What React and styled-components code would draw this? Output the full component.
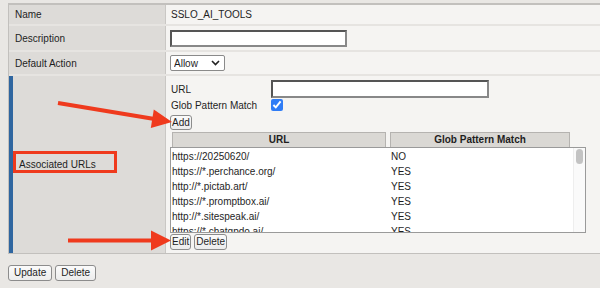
import React from "react";
import styled, { createGlobalStyle } from "styled-components";

const Global = createGlobalStyle`
  html, body { margin: 0; padding: 0; }
  body {
    background: #e9e7e4;
    font-family: "Liberation Sans", Arial, sans-serif;
    font-size: 10px;
    color: #1e1e1e;
  }
`;

const Page = styled.div`
  position: relative;
  width: 600px;
  height: 288px;
  padding-top: 3px;
  box-sizing: border-box;
  overflow: hidden;
`;

const Table = styled.div`
  margin-left: 8px;
  border-top: 2px solid #c2c0bd;
  border-left: 1px solid #c2c0bd;
  display: flex;
  flex-direction: column;
  gap: 2px;
  background: #e6e4e1;
  border-bottom: 1px solid #c2c0bd;
`;

const Row = styled.div`
  display: grid;
  grid-template-columns: 157px 1fr;
  height: ${(p) => p.$h}px;
`;

const Label = styled.div`
  background: #dddbd8;
  display: flex;
  align-items: center;
  padding-left: 6px;
  border-left: ${(p) => (p.$accent ? "4px solid #2f66a0" : "none")};
  border-right: 1px solid #c9c7c4;
`;

const Value = styled.div`
  background: #f5f4f2;
  display: flex;
  align-items: ${(p) => (p.$top ? "flex-start" : "center")};
  padding-left: 4px;
  padding-top: ${(p) => (p.$top ? "4px" : "0")};
`;

const Text = styled.span`
  padding-left: 1px;
`;

const TextInput = styled.input`
  box-sizing: border-box;
  width: ${(p) => p.$w}px;
  height: ${(p) => p.$h}px;
  border: 2px solid #555;
  border-right-color: #888;
  border-bottom-color: #888;
  background: #fff;
  margin: 0;
  padding: 0 2px;
  font: inherit;
`;

const SelectWrap = styled.div`
  box-sizing: border-box;
  width: 55px;
  height: 16px;
  display: flex;
  align-items: center;
  justify-content: space-between;
  border: 1px solid #8a8a8a;
  border-radius: 2px;
  background: #fff;
  padding: 0 4px 0 3px;
`;

const Select = styled.select`
  appearance: none;
  border: none;
  background: transparent;
  font: inherit;
  padding: 0;
  margin: 0;
  color: #1e1e1e;
  outline: none;
`;

const Assoc = styled.div`
  display: flex;
  flex-direction: column;
  align-items: flex-start;
`;

const FormGrid = styled.div`
  display: grid;
  grid-template-columns: 101px auto;
  grid-template-rows: 18px 14px;
  align-items: center;
`;

const Check = styled.input`
  width: 12px;
  height: 12px;
  margin: 0;
  accent-color: #2f7cf6;
`;

const Btn = styled.button`
  box-sizing: border-box;
  height: ${(p) => p.$h || 16}px;
  padding: 0 ${(p) => p.$pad || 1}px;
  margin: 0;
  font: inherit;
  color: #1e1e1e;
  background: linear-gradient(#fbfbfb, #ececec);
  border: 1px solid #8c8c8c;
  border-radius: 3px;
  line-height: 1;
`;

const BtnRow = styled.div`
  display: flex;
  gap: ${(p) => p.$gap || 3}px;
  margin-top: ${(p) => p.$mt || 0}px;
`;

const Header = styled.div`
  display: grid;
  grid-template-columns: 214px 180px;
  gap: 4px;
  margin: 2px 0 0 2px;
`;

const HeadCell = styled.div`
  height: 15px;
  box-sizing: border-box;
  background: #dad8d4;
  border: 1px solid #b5b3b0;
  border-bottom: none;
  font-weight: bold;
  text-align: center;
  line-height: 14px;
`;

const List = styled.div`
  box-sizing: border-box;
  width: 416px;
  height: 86px;
  border: 1px solid #9a9a9a;
  background: #fff;
  display: flex;
`;

const ListBody = styled.div`
  flex: 1;
  overflow: hidden;
  padding-top: 1px;
`;

const Item = styled.div`
  display: grid;
  grid-template-columns: 219px 1fr;
  height: 15px;
  line-height: 15px;
  padding-left: 1px;
  white-space: nowrap;
`;

const Track = styled.div`
  width: 12px;
  background: #fafafa;
  border-left: 1px solid #eeeeee;
  padding: 0 2px;
  box-sizing: border-box;
`;

const Thumb = styled.div`
  height: 15px;
  margin-top: 1px;
  border-radius: 4px;
  background: #c3c3c3;
`;

const Footer = styled.div`
  display: flex;
  gap: 3px;
  padding: 11px 0 0 8px;
`;

const Overlay = styled.svg`
  position: absolute;
  left: 0;
  top: 0;
  pointer-events: none;
`;

const items = [
  ["https://20250620/", "NO"],
  ["https://*.perchance.org/", "YES"],
  ["http://*.pictab.art/", "YES"],
  ["https://*.promptbox.ai/", "YES"],
  ["http://*.sitespeak.ai/", "YES"],
  ["https://*.chatgpdo.ai/", "YES"],
];

const RED = "#ef3a1d";

export default function App() {
  return (
    <Page>
      <Global />
      <Table>
        <Row $h={19}>
          <Label>Name</Label>
          <Value>
            <Text>SSLO_AI_TOOLS</Text>
          </Value>
        </Row>
        <Row $h={24}>
          <Label>Description</Label>
          <Value>
            <TextInput $w={177} $h={17} defaultValue="" />
          </Value>
        </Row>
        <Row $h={22}>
          <Label>Default Action</Label>
          <Value>
            <SelectWrap>
              <Select defaultValue="Allow">
                <option>Allow</option>
                <option>Reject</option>
              </Select>
              <svg width="9" height="6" viewBox="0 0 9 6">
                <path d="M1 1 L4.5 4.5 L8 1" fill="none" stroke="#222" strokeWidth="1.6" />
              </svg>
            </SelectWrap>
          </Value>
        </Row>
        <Row $h={177}>
          <Label $accent>Associated URLs</Label>
          <Value $top>
            <Assoc>
              <FormGrid>
                <Text>URL</Text>
                <TextInput $w={218} $h={18} defaultValue="" />
                <Text>Glob Pattern Match</Text>
                <Check type="checkbox" defaultChecked />
              </FormGrid>
              <BtnRow $mt={3}>
                <Btn $h={15}>Add</Btn>
              </BtnRow>
              <Header>
                <HeadCell>URL</HeadCell>
                <HeadCell>Glob Pattern Match</HeadCell>
              </Header>
              <List>
                <ListBody>
                  {items.map(([u, g]) => (
                    <Item key={u}>
                      <span>{u}</span>
                      <span>{g}</span>
                    </Item>
                  ))}
                </ListBody>
                <Track>
                  <Thumb />
                </Track>
              </List>
              <BtnRow $mt={1}>
                <Btn>Edit</Btn>
                <Btn>Delete</Btn>
              </BtnRow>
            </Assoc>
          </Value>
        </Row>
      </Table>
      <Footer>
        <Btn $h={16} $pad={5}>Update</Btn>
        <Btn $h={16} $pad={5}>Delete</Btn>
      </Footer>
      <Overlay width="600" height="288" viewBox="0 0 600 288">
        <line x1="58" y1="103" x2="156" y2="119.3" stroke={RED} strokeWidth="4" />
        <polygon points="172,122 153.8,109.5 150.8,128" fill={RED} />
        <line x1="68" y1="240.5" x2="155" y2="240.5" stroke={RED} strokeWidth="4" />
        <polygon points="171,240.5 151,230.5 151,250.5" fill={RED} />
        <rect x="14.5" y="152.5" width="101" height="19" fill="none" stroke={RED} strokeWidth="3" />
      </Overlay>
    </Page>
  );
}
